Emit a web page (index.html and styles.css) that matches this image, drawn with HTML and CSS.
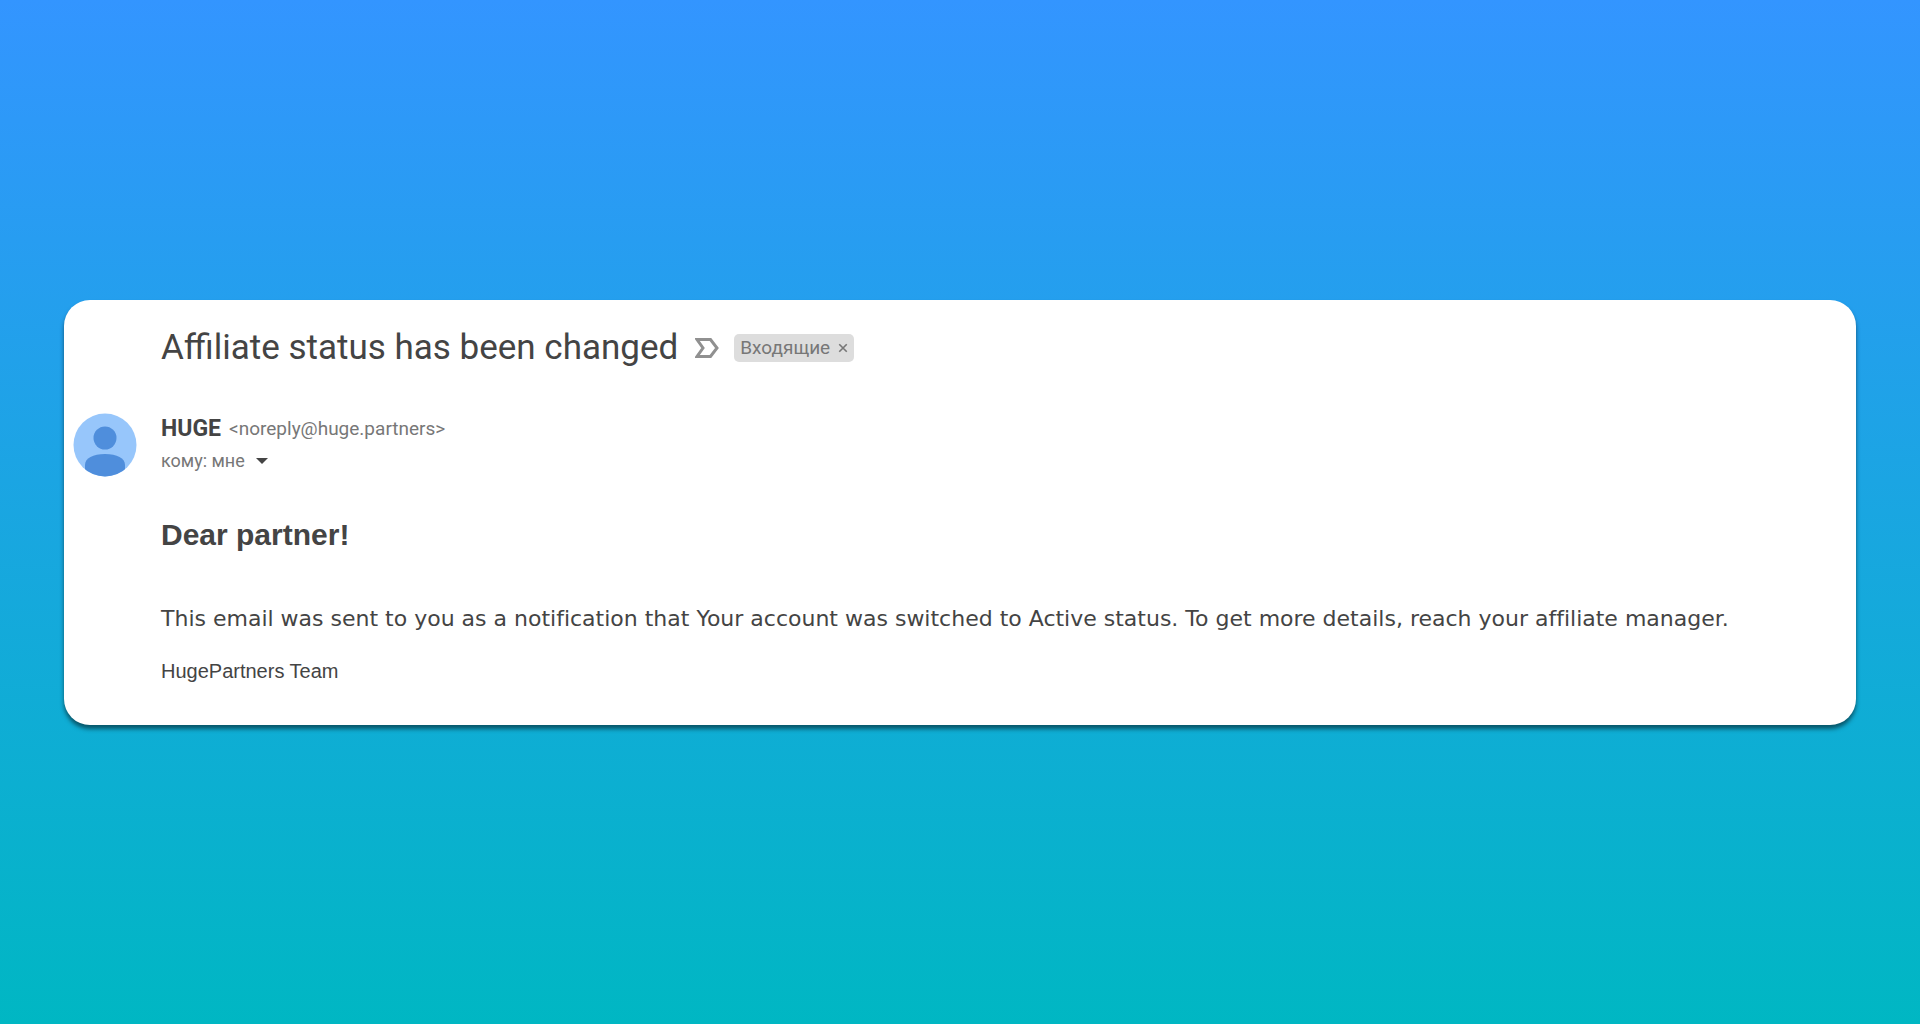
FILE: index.html
```
<!DOCTYPE html>
<html lang="en">
<head>
    <meta charset="UTF-8">
    <meta name="viewport" content="width=device-width, initial-scale=1.0">
    <title>Affiliate status has been changed</title>
    <link rel="stylesheet" href="styles.css">
</head>
<body>
    <main class="mail">
        <header class="subject">
            <h1>Affiliate status has been changed</h1>
            <svg class="important" viewBox="0 0 24 20" aria-hidden="true">
                <path d="M2 1.5H15.5L22 10L15.5 18.5H2L8 10Z"/>
            </svg>
            <span class="label" lang="ru">Входящие
                <button type="button" aria-label="Remove label">
                    <svg viewBox="0 0 12 12"><path d="M1.5 1.5L10.5 10.5M10.5 1.5L1.5 10.5"/></svg>
                </button>
            </span>
        </header>

        <section class="sender">
            <svg class="avatar" viewBox="0 0 64 64" aria-hidden="true">
                <clipPath id="round"><circle cx="32" cy="32" r="31.5"/></clipPath>
                <circle class="avatar-bg" cx="32" cy="32" r="31.5"/>
                <circle cx="32" cy="25" r="11.5"/>
                <path clip-path="url(#round)" d="M12 64V52C12 45 20 41 32 41S52 45 52 52V64Z"/>
            </svg>
            <div class="from">
                <strong>HUGE</strong>
                <span class="address">&lt;noreply@huge.partners&gt;</span>
            </div>
            <div class="to" lang="ru">
                кому: мне
                <button type="button" aria-label="Show details">
                    <svg viewBox="0 0 14 8"><path d="M1 1H13L7 7Z"/></svg>
                </button>
            </div>
        </section>

        <article class="body">
            <h2>Dear partner!</h2>
            <p class="text">This email was sent to you as a notification that Your account was switched to Active status. To get more details, reach your affiliate manager.</p>
            <p class="team">HugePartners Team</p>
        </article>
    </main>
</body>
</html>
```
FILE: styles.css
```
* {
    box-sizing: border-box;
}
body {
    margin: 0;
    min-height: 100vh;
    padding: 0 64px;
    display: flex;
    align-items: center;
    background: linear-gradient(#3395ff, #00b7c3);
    color: #444;
    font-family: Roboto, "Liberation Sans", sans-serif;
}
h1, h2, p {
    margin: 0;
}
button {
    display: flex;
    padding: 0;
    border: none;
    background: none;
    cursor: pointer;
}
.mail {
    width: 100%;
    padding: 28px 64px 38px 97px;
    background: #fff;
    border-radius: 26px;
    box-shadow: 0 4px 4px rgba(0, 0, 0, 0.5);
}
.subject {
    display: flex;
    align-items: center;
    flex-wrap: wrap;
}
.subject h1 {
    font-size: 35px;
    line-height: 40px;
    font-weight: 400;
}
.important {
    width: 24px;
    height: 20px;
    margin: 0 15px 0 17px;
    fill: none;
    stroke: #909090;
    stroke-width: 3;
}
.label {
    display: flex;
    align-items: center;
    gap: 8px;
    height: 28px;
    padding: 0 6px;
    background: #ddd;
    border-radius: 5px;
    color: #777;
    font-size: 19px;
}
.label svg {
    width: 10px;
    height: 10px;
    stroke: #777;
    stroke-width: 2;
}
.sender {
    position: relative;
    margin-top: 45px;
    color: #777;
}
.avatar {
    position: absolute;
    left: -88px;
    top: 0;
    width: 64px;
    height: 64px;
    fill: #4f8edc;
}
.avatar-bg {
    fill: #97c6fb;
}
.from {
    display: flex;
    align-items: center;
    gap: 8px;
    font-size: 19px;
    line-height: 32px;
}
.from strong {
    color: #444;
    font-size: 23px;
}
.to {
    display: flex;
    align-items: center;
    gap: 10px;
    font-size: 18px;
    line-height: 32px;
}
.to svg {
    width: 14px;
    height: 8px;
    fill: #444;
}
.body {
    margin-top: 38px;
    font-family: "Liberation Sans", sans-serif;
}
.body h2 {
    font-size: 30px;
    line-height: 40px;
}
.text {
    margin-top: 48px;
    font-family: "DejaVu Sans", sans-serif;
    font-size: 22px;
    line-height: 32px;
    font-variant-ligatures: none;
}
.team {
    margin-top: 20px;
    font-size: 20px;
    line-height: 32px;
}
```
